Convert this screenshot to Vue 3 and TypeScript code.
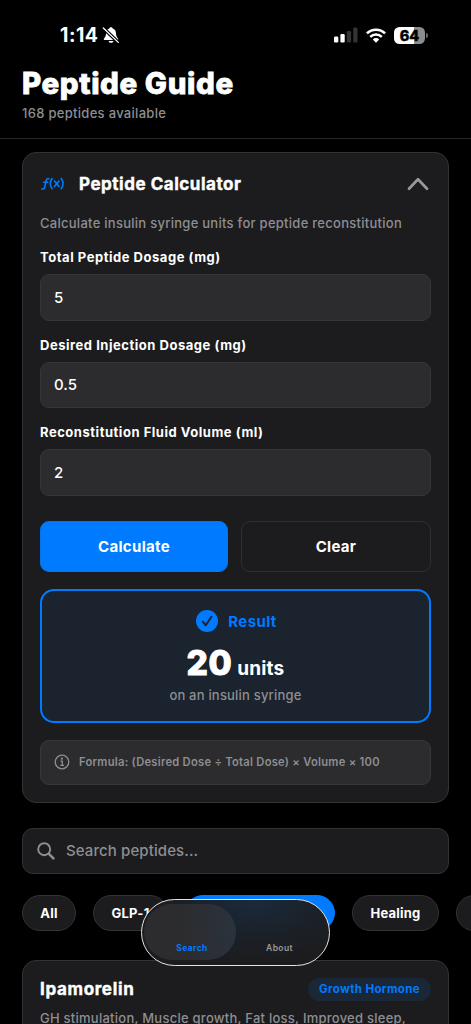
<script setup lang="ts">
import { ref } from 'vue'

interface Field {
  id: string
  label: string
  value: string
}

const fields = ref<Field[]>([
  { id: 'total', label: 'Total Peptide Dosage (mg)', value: '5' },
  { id: 'desired', label: 'Desired Injection Dosage (mg)', value: '0.5' },
  { id: 'volume', label: 'Reconstitution Fluid Volume (ml)', value: '2' },
])
const units = ref<number | null>(20)

function calculate(): void {
  const [total, desired, volume] = fields.value.map((f) => Number(f.value))
  units.value = total > 0 ? Math.round((desired / total) * volume * 100) : null
}

function clear(): void {
  fields.value.forEach((f) => (f.value = ''))
  units.value = null
}
</script>

<template>
  <div class="screen">
    <header class="status">
      <div class="clock">
        <span class="time">1:14</span>
        <svg class="bell" viewBox="0 0 18 18">
          <path d="M9 1.2c-.9 0-1.5.5-1.7 1.3C5 3.2 4.1 5 4 7.300c-.1 2.500-.6 3.600-1.600 4.600-.5.500-.7.900-.7 1.300 0 .5.400.8 1 .8h12.600c.6 0 1-.3 1-.8 0-.4-.2-.8-.7-1.300-1-1-1.500-2.100-1.600-4.600C13.900 5 13 3.200 10.700 2.500 10.500 1.700 9.900 1.200 9 1.200zM6.600 14.900c.2 1.200 1.200 1.900 2.400 1.900s2.200-.7 2.400-1.900z" fill="#fff" />
          <path d="M1 1.700 16.600 16.700" stroke="#000" stroke-width="3.600" />
          <path d="M1.300 2 16.300 16.400" stroke="#fff" stroke-width="1.300" stroke-linecap="round" />
        </svg>
      </div>
      <div class="signals">
        <svg class="cell" viewBox="0 0 24 16">
          <rect x="0" y="9.500" width="4.300" height="6" rx="1.200" fill="#fff" />
          <rect x="6.400" y="7" width="4.300" height="8.500" rx="1.200" fill="#fff" />
          <rect x="12.800" y="4" width="4.300" height="11.500" rx="1.200" fill="#333" />
          <rect x="19.200" y="0.500" width="4.300" height="15" rx="1.200" fill="#333" />
        </svg>
        <svg class="wifi" viewBox="0 0 20 15">
          <g fill="none" stroke="#fff" stroke-width="2.500">
            <path d="M.9 5.400a13 13 0 0 1 18.200 0" />
            <path d="M4.200 8.800a8.300 8.300 0 0 1 11.600 0" />
          </g>
          <path d="M6.800 11.400a4.600 4.600 0 0 1 6.400 0L10 14.700z" fill="#fff" />
        </svg>
        <div class="battery"><span class="cellbody">64</span><i class="tip"></i></div>
      </div>
    </header>

    <div class="heading">
      <h1>Peptide Guide</h1>
      <p>168 peptides available</p>
    </div>

    <main>
      <section class="card calc">
        <div class="calc-head">
          <svg class="fx" viewBox="0 0 23 14">
            <g fill="none" stroke="#007aff" stroke-width="1.600" stroke-linecap="round" stroke-linejoin="round">
              <path d="M.9 11.900c1.500.5 2.500-.1 2.900-1.900L5 4c.4-1.900 1.200-2.700 2.800-2.200M2.700 5.300h4" />
              <path d="M11 1.500c-2.200 3.200-2.200 7 0 10.300M20.300 1.500c2.200 3.200 2.200 7 0 10.300" />
              <path d="m13.400 4 4.600 5.600M18 4l-4.600 5.600" />
            </g>
          </svg>
          <h2>Peptide Calculator</h2>
          <svg class="chev" viewBox="0 0 22 14"><path d="M2 11.700 11 2.300l9 9.400" fill="none" stroke="#98989d" stroke-width="2.700" stroke-linecap="round" stroke-linejoin="round" /></svg>
        </div>
        <p class="desc">Calculate insulin syringe units for peptide reconstitution</p>
        <div v-for="f in fields" :key="f.id" class="field">
          <label :for="f.id">{{ f.label }}</label>
          <input :id="f.id" v-model="f.value" inputmode="decimal" />
        </div>
        <div class="actions">
          <button class="primary" @click="calculate">Calculate</button>
          <button class="secondary" @click="clear">Clear</button>
        </div>
        <div v-if="units !== null" class="result">
          <div class="result-head">
            <svg viewBox="0 0 22 22">
              <circle cx="11" cy="11" r="11" fill="#007aff" />
              <path d="m6.800 11.700 3 3.600 5.600-8.600" fill="none" stroke="#1a232e" stroke-width="1.900" stroke-linecap="round" stroke-linejoin="round" />
            </svg>
            <span>Result</span>
          </div>
          <div class="amount"><strong>{{ units }}</strong><span>units</span></div>
          <p>on an insulin syringe</p>
        </div>
        <div class="formula">
          <svg viewBox="0 0 16 16">
            <circle cx="8" cy="8" r="6.800" fill="none" stroke="#8e8e93" stroke-width="1.300" />
            <circle cx="7.900" cy="4.700" r="1.100" fill="#8e8e93" />
            <path d="M6.500 7.200h1.800v4M6.300 11.400h3.700" fill="none" stroke="#8e8e93" stroke-width="1.300" />
          </svg>
          <span>Formula: (Desired Dose ÷ Total Dose) × Volume × 100</span>
        </div>
      </section>

      <div class="search">
        <svg viewBox="0 0 18 18">
          <circle cx="7.200" cy="7.200" r="6" fill="none" stroke="#8e8e93" stroke-width="1.900" />
          <path d="m11.900 11.900 4.500 4.500" stroke="#8e8e93" stroke-width="2.600" stroke-linecap="round" />
        </svg>
        <span>Search peptides...</span>
      </div>

      <div class="chips">
        <span class="chip all">All</span>
        <span class="chip glp">GLP-1</span>
        <span class="chip active"></span>
        <span class="chip healing">Healing</span>
        <span class="chip more"></span>
      </div>

      <article class="card peptide">
        <div class="peptide-head">
          <h3>Ipamorelin</h3>
          <span class="tag">Growth Hormone</span>
        </div>
        <p>GH stimulation, Muscle growth, Fat loss, Improved sleep,</p>
      </article>
    </main>

    <nav class="tabs">
      <a class="tab selected">Search</a>
      <a class="tab">About</a>
    </nav>
  </div>
</template>

<style>
body {
  margin: 0;
  background: #000;
}
</style>

<style scoped>
* {
  box-sizing: border-box;
}
.screen {
  position: relative;
  width: 471px;
  height: 1024px;
  overflow: hidden;
  background: #000;
  color: #fff;
  font-family: Inter, 'Liberation Sans', sans-serif;
}
h1, h2, h3, p {
  margin: 0;
  white-space: nowrap;
}
svg {
  display: block;
  flex: none;
}
.status {
  height: 66px;
  padding: 25px 43px 0 60px;
  display: flex;
  justify-content: space-between;
}
.clock, .signals {
  display: flex;
  align-items: center;
  height: 20px;
}
.time {
  font-size: 19.500px;
  font-weight: 700;
  letter-spacing: 0.5px;
}
.bell {
  width: 18px;
  height: 18px;
  margin-left: 3px;
}
.cell {
  width: 24px;
  height: 16px;
}
.wifi {
  width: 20px;
  height: 15px;
  margin: 0 8px;
}
.battery {
  display: flex;
  align-items: center;
}
.cellbody {
  width: 31px;
  height: 17px;
  border-radius: 5.500px;
  background: linear-gradient(90deg, #fff 64%, #8c8c8c 64%);
  color: #000;
  font-size: 14.500px;
  font-weight: 800;
  line-height: 17px;
  text-align: center;
  -webkit-text-stroke: 0.4px #000;
}
.tip {
  width: 2px;
  height: 5px;
  margin-left: 1px;
  border-radius: 0 2px 2px 0;
  background: #666;
}
.heading {
  height: 73px;
  padding: 0 22px;
  border-bottom: 1px solid #262628;
}
h1 {
  height: 34px;
  line-height: 34px;
  font-size: 29.500px;
  font-weight: 800;
  letter-spacing: 0.6px;
  -webkit-text-stroke: 0.8px #fff;
}
.heading p {
  margin-top: 4px;
  line-height: 18px;
  font-size: 13px;
  font-weight: 500;
  letter-spacing: 0.3px;
  color: #8e8e93;
}
main {
  padding: 13px 22px 0;
}
.card {
  border: 1px solid #333335;
  border-radius: 14px;
  background: #1c1c1e;
}
.calc {
  height: 651px;
  padding: 0 17px;
}
.calc-head {
  height: 61px;
  display: flex;
  align-items: center;
}
.fx {
  width: 23px;
  height: 14px;
  margin-left: 1px;
}
h2 {
  margin-left: 15px;
  font-size: 17px;
  font-weight: 700;
  letter-spacing: 0.53px;
  -webkit-text-stroke: 0.4px #fff;
}
.chev {
  width: 22px;
  height: 14px;
  margin-left: auto;
  margin-right: 2px;
}
.desc {
  line-height: 18px;
  font-size: 13px;
  font-weight: 500;
  letter-spacing: 0.27px;
  color: #8e8e93;
}
.field {
  height: 87.700px;
}
label {
  display: block;
  padding-top: 16px;
  height: 42px;
  line-height: 18.600px;
  font-size: 13px;
  font-weight: 700;
  letter-spacing: 0.53px;
  white-space: nowrap;
}
input {
  display: block;
  width: 100%;
  height: 46.500px;
  padding: 0 13px;
  border: 1px solid #363638;
  border-radius: 9px;
  outline: 0;
  background: #2c2c2e;
  color: #fff;
  font: 500 15px Inter, sans-serif;
}
.actions {
  margin-top: 26px;
  display: grid;
  grid-template-columns: 188px 190px;
  justify-content: space-between;
}
button {
  height: 51px;
  padding: 0;
  border: 1px solid #303032;
  border-radius: 9px;
  background: none;
  color: #fff;
  font: 700 15px Inter, sans-serif;
  letter-spacing: 0.3px;
}
.primary {
  border-color: #0874e6;
  background: #007aff;
}
.result {
  height: 134px;
  margin-top: 17px;
  padding-top: 18px;
  border: 2px solid #007aff;
  border-radius: 14px;
  background: #1a232e;
  text-align: center;
}
.result-head {
  display: flex;
  align-items: center;
  justify-content: center;
  height: 24px;
  gap: 10px;
  padding-left: 2px;
  color: #007aff;
  font-size: 15px;
  font-weight: 700;
  letter-spacing: 0.4px;
}
.result-head svg {
  width: 22px;
  height: 22px;
}
.amount {
  display: flex;
  align-items: baseline;
  justify-content: center;
  height: 40px;
  margin-top: 10px;
  line-height: 40px;
}
.amount strong {
  font-size: 33.500px;
  font-weight: 800;
  letter-spacing: 0.5px;
  -webkit-text-stroke: 1px #fff;
}
.amount span {
  margin-left: 5px;
  font-size: 19px;
  font-weight: 700;
  letter-spacing: 0.2px;
}
.result p {
  margin-top: 3px;
  line-height: 18px;
  font-size: 13px;
  font-weight: 500;
  letter-spacing: 0.2px;
  color: #8e8e93;
}
.formula {
  display: flex;
  align-items: center;
  height: 45px;
  margin-top: 17px;
  padding-left: 13px;
  padding-bottom: 1px;
  border: 1px solid #38383a;
  border-radius: 9px;
  background: #2c2c2e;
  color: #8e8e93;
  font-size: 11.200px;
  font-weight: 600;
  letter-spacing: 0.26px;
  white-space: nowrap;
}
.formula svg {
  width: 16px;
  height: 16px;
  margin-right: 9px;
}
.search {
  display: flex;
  align-items: center;
  height: 46px;
  margin-top: 25px;
  padding-left: 14px;
  padding-bottom: 1px;
  border: 1px solid #333335;
  border-radius: 11px;
  background: #1c1c1e;
  color: #8e8e93;
  font-size: 15px;
  font-weight: 500;
  letter-spacing: 0.1px;
}
.search svg {
  width: 18px;
  height: 18px;
  margin-right: 11px;
}
.chips {
  display: flex;
  gap: 17px;
  width: 449px;
  margin-top: 21px;
}
.chip {
  flex: none;
  height: 36px;
  border: 1px solid #333335;
  border-radius: 18px;
  background: #1c1c1e;
  font-size: 13px;
  font-weight: 650;
  line-height: 34px;
  text-align: center;
  letter-spacing: 0.2px;
}
.all {
  width: 54px;
}
.glp {
  width: 75px;
}
.active {
  width: 150px;
  border-color: #007aff;
  background: #007aff;
}
.healing {
  width: 87px;
}
.more {
  width: 60px;
}
.peptide {
  height: 120px;
  margin-top: 29px;
  padding: 17px 17px 0;
}
.peptide-head {
  display: flex;
  align-items: center;
  justify-content: space-between;
  height: 23px;
}
h3 {
  margin-top: -1px;
  font-size: 17px;
  font-weight: 700;
  letter-spacing: 0.65px;
  -webkit-text-stroke: 0.4px #fff;
}
.tag {
  width: 123px;
  height: 23px;
  border-radius: 12px;
  background: #192737;
  color: #007aff;
  font-size: 11.500px;
  font-weight: 700;
  line-height: 23px;
  letter-spacing: 0.36px;
  text-align: center;
}
.peptide p {
  margin-top: 8px;
  line-height: 18px;
  font-size: 13px;
  font-weight: 500;
  letter-spacing: 0.25px;
  color: #8e8e93;
}
.tabs {
  position: absolute;
  left: 141px;
  top: 899px;
  display: flex;
  width: 189px;
  height: 67px;
  padding: 4px 2px;
  border: 1.500px solid #e4e4e4;
  border-radius: 34px;
  background: radial-gradient(ellipse 120px 62px at 60% 0, #1a2a3c, rgba(27, 35, 45, 0.600) 60%, transparent), #1c1c1e;
}
.tab {
  width: 91px;
  height: 56px;
  padding-top: 38.500px;
  border-radius: 28px;
  color: #98989d;
  font-size: 8.500px;
  font-weight: 600;
  line-height: 11px;
  letter-spacing: 0.4px;
  text-align: center;
}
.selected {
  width: 92px;
  padding-left: 4px;
  background: linear-gradient(80deg, #2c2c2e 40%, #2a333e);
  color: #007aff;
  font-weight: 700;
}
.selected + .tab {
  margin-left: -2px;
}
</style>
